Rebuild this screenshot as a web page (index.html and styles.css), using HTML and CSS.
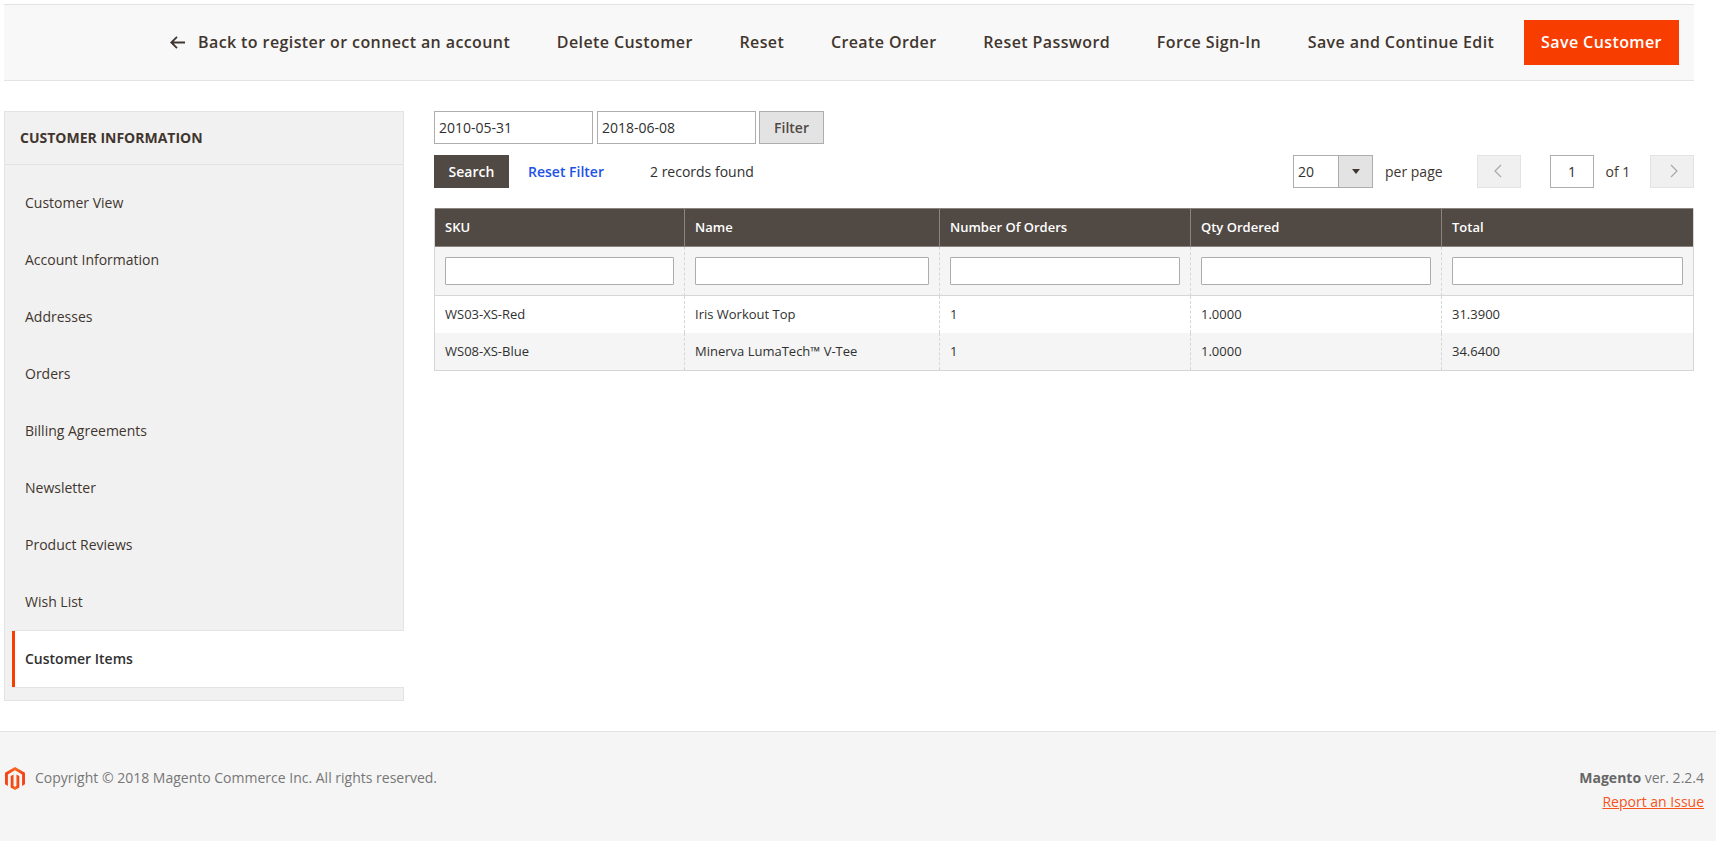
FILE: index.html
```html
<!DOCTYPE html>
<html lang="en">
<head>
<meta charset="utf-8">
<title>Customer Items</title>
<link rel="stylesheet" href="styles.css">
</head>
<body>
<div class="page">
  <header class="toolbar">
    <button class="act back"><svg class="back-icon" viewBox="0 0 15 13" width="15" height="13"><path d="M7 .8 1.3 6.5 7 12.2M1.3 6.5H15" fill="none" stroke="#41362f" stroke-width="1.8"/></svg>Back to register or connect an account</button>
    <button class="act">Delete Customer</button>
    <button class="act">Reset</button>
    <button class="act">Create Order</button>
    <button class="act">Reset Password</button>
    <button class="act">Force Sign-In</button>
    <button class="act">Save and Continue Edit</button>
    <button class="save">Save Customer</button>
  </header>
  <div class="columns">
    <aside class="side">
      <h3 class="side-title">CUSTOMER INFORMATION</h3>
      <ul class="side-list">
        <li class="side-item">Customer View</li>
        <li class="side-item">Account Information</li>
        <li class="side-item">Addresses</li>
        <li class="side-item">Orders</li>
        <li class="side-item">Billing Agreements</li>
        <li class="side-item">Newsletter</li>
        <li class="side-item">Product Reviews</li>
        <li class="side-item">Wish List</li>
        <li class="side-item active">Customer Items</li>
      </ul>
    </aside>
    <main class="main">
      <div class="dates">
        <input class="date" value="2010-05-31">
        <input class="date" value="2018-06-08">
        <button class="filter">Filter</button>
      </div>
      <div class="grid-bar">
        <button class="search">Search</button>
        <a class="reset-filter" href="#">Reset Filter</a>
        <span class="found">2 records found</span>
        <div class="pager">
          <div class="select"><span class="select-val">20</span><span class="select-arrow"><i class="tri"></i></span></div>
          <span class="per">per page</span>
          <button class="nav prev"><svg viewBox="0 0 8 14" width="8" height="14"><path d="M7 1 1 7l6 6" fill="none" stroke="#a8a8a8" stroke-width="1.2"/></svg></button>
          <input class="page-in" value="1">
          <span class="of">of 1</span>
          <button class="nav next"><svg viewBox="0 0 8 14" width="8" height="14"><path d="m1 1 6 6-6 6" fill="none" stroke="#a8a8a8" stroke-width="1.2"/></svg></button>
        </div>
      </div>
      <table class="grid">
        <colgroup><col class="c1"><col class="c2"><col class="c3"><col class="c4"><col class="c5"></colgroup>
        <thead>
          <tr><th>SKU</th><th>Name</th><th>Number Of Orders</th><th>Qty Ordered</th><th>Total</th></tr>
        </thead>
        <tbody>
          <tr class="filters"><td><input class="f"></td><td><input class="f"></td><td><input class="f"></td><td><input class="f"></td><td><input class="f"></td></tr>
          <tr class="row"><td>WS03-XS-Red</td><td>Iris Workout Top</td><td>1</td><td>1.0000</td><td>31.3900</td></tr>
          <tr class="row alt"><td>WS08-XS-Blue</td><td>Minerva LumaTech™ V-Tee</td><td>1</td><td>1.0000</td><td>34.6400</td></tr>
        </tbody>
      </table>
    </main>
  </div>
</div>
<footer class="footer">
  <div class="copy">
    <svg class="logo" viewBox="0 0 43.2 50" width="20" height="23"><defs><linearGradient id="lg" x1="0" y1="0" x2="1" y2="0"><stop offset="0" stop-color="#f23c12"/><stop offset=".5" stop-color="#f8671c"/><stop offset="1" stop-color="#f23c12"/></linearGradient></defs><path fill="url(#lg)" d="M21.6 0 0 12.5v25l6.2 3.6-.05-25L21.6 7.2l15.4 8.9v25l6.2-3.6v-25z"/><path fill="url(#lg)" d="M24.7 41.1 21.6 43l-3.1-1.9V16.1l-6.2 3.6v25l9.3 5.3 9.3-5.3v-25l-6.2-3.6z"/></svg>
    <span class="copy-text">Copyright © 2018 Magento Commerce Inc. All rights reserved.</span>
  </div>
  <div class="ver">
    <div class="ver-line"><b>Magento</b> ver. 2.2.4</div>
    <a class="issue" href="#">Report an Issue</a>
  </div>
</footer>
</body>
</html>
```
FILE: styles.css
```css
* { box-sizing: border-box; }
html, body { margin: 0; padding: 0; }
body { font-family: "Open Sans", sans-serif; font-size: 14px; color: #41362f; background: #fff; height: 841px; overflow: hidden; display: flex; flex-direction: column; }
button, input { font-family: inherit; }
.page { flex: 1; padding: 4px 22px 0 4px; }
.toolbar { height: 77px; background: #f8f8f8; border-top: 1px solid #e3e3e3; border-bottom: 1px solid #e3e3e3; display: flex; align-items: center; justify-content: flex-end; padding: 0 15px 1px 0; gap: 46.7px; }
.act { background: none; border: 0; padding: 0; font-size: 16px; font-weight: 600; letter-spacing: .4px; color: #41362f; display: flex; align-items: center; }
.back-icon { margin-right: 13px; }
.save { width: 155px; height: 45px; margin-left: -17px; background: #f83d00; border: 0; color: #fff; font-size: 16px; font-weight: 600; letter-spacing: .4px; padding: 0; }
.columns { display: flex; margin-top: 30px; }
.side { width: 400px; height: 590px; background: #f1f1f1; border: 1px solid #e3e3e3; flex: none; }
.side-title { margin: 0; height: 53px; border-bottom: 1px solid #e3e3e3; font-size: 14px; font-weight: 700; color: #41362f; padding: 0 0 0 15px; line-height: 51px; }
.side-list { list-style: none; margin: 0; padding: 9px 0 0; }
.side-item { height: 57px; line-height: 57px; font-size: 14px; color: #41362f; margin-left: -1px; padding-left: 21px; }
.active { height: 58px; background: #fff; font-weight: 600; color: #303030; border-top: 1px solid #e3e3e3; border-bottom: 1px solid #e3e3e3; margin: 0 -1px 0 7px; padding-left: 13px; line-height: 56px; box-shadow: inset 3px 0 0 #f83d00; }
.main { flex: 1; margin-left: 30px; min-width: 0; }
.dates { display: flex; height: 33px; }
.date { width: 159px; height: 33px; border: 1px solid #adadad; padding: 0 4px; font-size: 14px; color: #303030; margin-right: 4px; background: #fff; }
.filter { width: 65px; height: 33px; margin-left: -1px; background: #e3e3e3; border: 1px solid #adadad; font-size: 14px; font-weight: 600; color: #514943; padding: 0; }
.grid-bar { display: flex; align-items: center; height: 33px; margin-top: 11px; }
.search { width: 75px; height: 33px; background: #514943; border: 0; color: #fff; font-size: 14px; font-weight: 600; padding: 0; }
.reset-filter { margin-left: 19px; color: #1e53e5; font-weight: 600; text-decoration: none; font-size: 14px; }
.found { margin-left: 46px; color: #303030; font-size: 14px; }
.pager { margin-left: auto; display: flex; align-items: center; height: 33px; }
.select { width: 80px; height: 33px; border: 1px solid #adadad; display: flex; background: #fff; }
.select-val { flex: 1; padding-left: 4px; line-height: 31px; color: #303030; font-size: 14px; }
.select-arrow { width: 34px; background: #e3e3e3; border-left: 1px solid #adadad; display: flex; align-items: center; justify-content: center; }
.tri { width: 0; height: 0; border-left: 4px solid transparent; border-right: 4px solid transparent; border-top: 5px solid #41362f; }
.per { margin-left: 12px; width: 92px; color: #41362f; font-size: 14px; }
.nav { width: 44px; height: 33px; background: #f0f0f0; border: 1px solid #e3e3e3; padding: 0 0 1px; display: flex; align-items: center; justify-content: center; }
.prev { padding-right: 2px; }
.next { padding-left: 4px; }
.page-in { width: 44px; height: 33px; margin-left: 29px; border: 1px solid #adadad; text-align: center; font-size: 14px; color: #303030; padding: 0; }
.of { margin-left: 11.5px; width: 44.5px; color: #41362f; font-size: 14px; }
.grid { margin-top: 20px; width: 1260px; border-collapse: separate; border-spacing: 0; table-layout: fixed; font-size: 13px; color: #303030; border-bottom: 1px solid #d6d6d6; border-left: 1px solid #d6d6d6; border-right: 1px solid #d6d6d6; }
.c1 { width: 249px; } .c2 { width: 255px; } .c3 { width: 251px; } .c4 { width: 251px; } .c5 { width: 252px; }
.grid th { height: 39px; background: #514943; color: #fff; text-align: left; font-size: 13px; font-weight: 600; padding: 0 10px 2px; border-top: 1px solid #8a837f; border-bottom: 1px solid #8a837f; border-left: 1px solid #8a837f; }
.grid th:first-child { border-left: 0; }
.grid td { padding: 0 10px; border-left: 1px dashed #d6d6d6; }
.grid td:first-child { border-left: 0; }
.filters td { height: 49px; background: #f5f5f5; border-bottom: 1px solid #d6d6d6; vertical-align: middle; padding-bottom: 1px; }
.f { display: block; width: 100%; height: 28px; border: 1px solid #adadad; border-radius: 1px; background: #fff; }
.row td { height: 37px; background: #fff; padding-bottom: 2px; }
.row.alt td { background: #f5f5f5; }
.footer { height: 110px; flex: none; background: #f5f5f5; border-top: 1px solid #e3e3e3; display: flex; justify-content: space-between; padding: 35px 12px 0 5px; color: #777; font-size: 14px; }
.copy { display: flex; align-items: flex-start; }
.logo { margin-right: 10px; flex: none; }
.copy-text { padding-top: 1px; }
.ver { text-align: right; line-height: 19px; padding-top: 1px; }
.ver b { font-weight: 700; color: #666; }
.issue { display: block; color: #f6531c; margin-top: 5px; }
```
